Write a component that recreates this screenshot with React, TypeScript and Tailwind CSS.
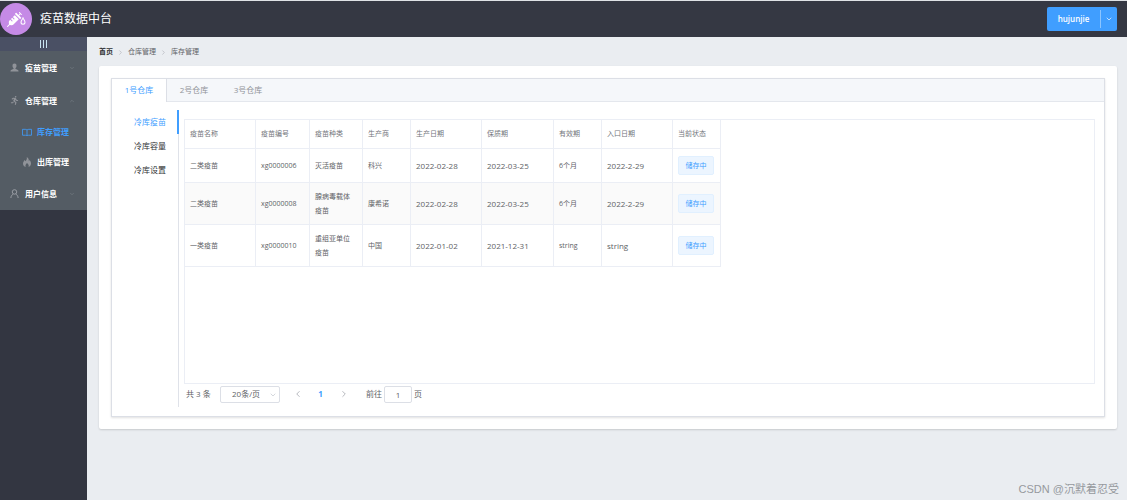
import { useState } from 'react'
import { ChevronDown, ChevronLeft, ChevronRight, ChevronUp } from 'lucide-react'
import { FaRunning, FaSyringe } from 'react-icons/fa'

const columns = [
  { label: '疫苗名称', width: 'w-[71px]' },
  { label: '疫苗编号', width: 'w-[54px]' },
  { label: '疫苗种类', width: 'w-[53px]' },
  { label: '生产商', width: 'w-[48px]' },
  { label: '生产日期', width: 'w-[71px]' },
  { label: '保质期', width: 'w-[72px]' },
  { label: '有效期', width: 'w-[48px]' },
  { label: '入口日期', width: 'w-[71px]' },
  { label: '当前状态', width: 'w-[48px]' },
]

const rows = [
  { name: '二类疫苗', code: 'xg0000006', kind: '灭活疫苗', maker: '科兴', made: '2022-02-28', best: '2022-03-25', valid: '6个月', entry: '2022-2-29' },
  { name: '二类疫苗', code: 'xg0000008', kind: '腺病毒载体疫苗', maker: '康希诺', made: '2022-02-28', best: '2022-03-25', valid: '6个月', entry: '2022-2-29' },
  { name: '一类疫苗', code: 'xg0000010', kind: '重组亚单位疫苗', maker: '中国', made: '2022-01-02', best: '2021-12-31', valid: 'string', entry: 'string' },
]

const warehouses = ['1号仓库', '2号仓库', '3号仓库']
const sections = ['冷库疫苗', '冷库容量', '冷库设置']

function Logo() {
  return (
    <div className="flex size-8 items-center justify-center rounded-full bg-[#c58ae6] text-white">
      <FaSyringe size={15} className="shrink-0" />
      <svg viewBox="0 0 10 14" className="-ml-[2px] mt-1 h-[8px] w-[6px] shrink-0">
        <path d="M5 1.5C4 4 1.5 6.5 1.5 9a3.5 3.5 0 0 0 7 0C8.5 6.5 6 4 5 1.5Z" fill="none" stroke="white" strokeWidth="1.8" />
      </svg>
    </div>
  )
}

function PersonIcon() {
  return (
    <svg viewBox="0 0 20 20" className="size-[9px] shrink-0" fill="#909399">
      <path d="M10 1a4.5 4.5 0 0 1 4.500 5c0 2.500-1 4.500-2.500 5.500v1.500l5.500 2.500c1 .5 1.500 1.500 1.500 3.500H1c0-2 .5-3 1.500-3.500L8 13v-1.500C6.500 10.500 5.500 8.500 5.500 6A4.500 4.500 0 0 1 10 1Z" />
    </svg>
  )
}

function UserIcon() {
  return (
    <svg viewBox="0 0 20 20" className="size-[9px] shrink-0" fill="none" stroke="#a0a4aa" strokeWidth="2">
      <circle cx="10" cy="6.5" r="5" />
      <path d="M2 20c0-4 2-7 5-8.5M18 20c0-4-2-7-5-8.5" />
    </svg>
  )
}

function BookIcon() {
  return (
    <svg viewBox="0 0 22 18" className="h-[9px] w-[10px] shrink-0" fill="none" stroke="currentColor" strokeWidth="1.8">
      <path d="M11 3.5C10 2.3 8.5 2 7 2H1v13h6.5c1.500 0 2.500.4 3.500 1.500 1-1.100 2-1.500 3.500-1.500H21V2h-6c-1.500 0-3 .3-4 1.500ZM11 3.500v13" />
    </svg>
  )
}

function FlameIcon() {
  return (
    <svg viewBox="0 0 20 20" className="size-[10px] shrink-0" fill="#909399">
      <path d="M9.5 0c4 2.500 4.500 5.500 4 8.500.8-.5 1.300-1.300 1.500-2.500 2 2 3.200 4.500 3 7.500-.2 3-2 5.300-5 6.500 1.200-3 .3-5.500-3-8-2.800 2.500-3.800 5-2.500 8-3.500-1-5.500-3.500-5.500-6.500C2 10 4 8.500 5 6c.8.8 1.200 1.500 1.400 2.500C9 6.500 10.500 3.500 9.500 0Z" />
    </svg>
  )
}

function Header() {
  return (
    <header className="flex h-[37px] items-center justify-between border-t border-[#dfe2e6] bg-[#353843] pr-[10px]">
      <div className="flex items-center gap-2">
        <Logo />
        <h1 className="text-[12px] text-white">疫苗数据中台</h1>
      </div>
      <div className="flex h-6 rounded-xs bg-[#409eff] text-white">
        <button className="w-[53px] text-[8px] font-semibold">hujunjie</button>
        <button aria-label="更多" className="my-[3px] flex w-[17px] items-center justify-center border-l border-[#8cc5ff]">
          <ChevronDown size={8} />
        </button>
      </div>
    </header>
  )
}

function Sidebar() {
  const group = 'flex h-[33px] w-full items-center gap-[6px] pl-[10px] pr-3'
  const child = 'flex h-[30px] items-center gap-[5px] pl-[22px]'
  return (
    <aside className="w-[87px] shrink-0 bg-[#333641] text-[8px] font-semibold text-white">
      <button aria-label="折叠菜单" className="flex h-[14px] w-full items-center justify-center gap-[2px] bg-[#4a5064]">
        <i className="h-[8px] w-px bg-[#c8e4f0]" />
        <i className="h-[8px] w-px bg-[#c8e4f0]" />
        <i className="h-[8px] w-px bg-[#c8e4f0]" />
      </button>
      <nav className="bg-[#545c64]">
        <button className={group}>
          <PersonIcon />
          疫苗管理
          <ChevronDown size={6} className="ml-auto text-[#7f868d]" />
        </button>
        <button className={group}>
          <FaRunning size={9} className="text-[#909399]" />
          仓库管理
          <ChevronUp size={6} className="ml-auto text-[#7f868d]" />
        </button>
        <a href="#stock" className={`${child} text-[#409eff]`}>
          <BookIcon />
          库存管理
        </a>
        <a href="#outbound" className={child}>
          <FlameIcon />
          出库管理
        </a>
        <button className={group}>
          <UserIcon />
          用户信息
          <ChevronDown size={6} className="ml-auto text-[#7f868d]" />
        </button>
      </nav>
    </aside>
  )
}

function Breadcrumb() {
  return (
    <nav className="flex h-[29px] items-center gap-1 pt-[2px] text-[7px] text-[#606266]">
      <a href="#home" className="font-bold text-[#303133]">首页</a>
      <ChevronRight size={7} className="text-[#a8abb2]" />
      <span>仓库管理</span>
      <ChevronRight size={7} className="text-[#a8abb2]" />
      <span>库存管理</span>
    </nav>
  )
}

function StockTable() {
  const cell = 'border-r border-b border-[#ebeef5] pl-[5px] pr-[6px] py-[6px]'
  return (
    <table className="w-[536px] table-fixed border-separate border-spacing-0 text-left text-[7px] leading-[14px] text-[#606266]">
      <thead>
        <tr className="h-[29px]">
          {columns.map((c) => (
            <th key={c.label} className={`${cell} ${c.width} font-normal whitespace-nowrap text-[#73767c]`}>{c.label}</th>
          ))}
        </tr>
      </thead>
      <tbody>
        {rows.map((r, i) => (
          <tr key={r.code} className={i === 0 ? 'h-[34px]' : i === 1 ? 'h-[42px] bg-[#fafafa]' : 'h-[42px]'}>
            <td className={cell}>{r.name}</td>
            <td className={cell}>{r.code}</td>
            <td className={cell}>{r.kind}</td>
            <td className={cell}>{r.maker}</td>
            <td className={`${cell} text-[8px]`}>{r.made}</td>
            <td className={`${cell} text-[8px]`}>{r.best}</td>
            <td className={cell}>{r.valid}</td>
            <td className={`${cell} text-[8px]`}>{r.entry}</td>
            <td className={cell}>
              <span className="flex h-[19px] items-center justify-center rounded-xs border border-[#e1f0ff] bg-[#ecf5ff] text-[#409eff]">
                储存中
              </span>
            </td>
          </tr>
        ))}
      </tbody>
    </table>
  )
}

function Pagination() {
  const [page, setPage] = useState('1')
  return (
    <div className="flex h-5 items-center pl-[2px] text-[8px] text-[#606266]">
      <span className="w-[34px]">共 3 条</span>
      <div className="relative">
        <select aria-label="每页条数" className="block h-[17px] w-[60px] appearance-none rounded-xs border border-[#dcdfe6] bg-white pl-[11px]">
          <option>20条/页</option>
          <option>50条/页</option>
        </select>
        <ChevronDown size={8} className="pointer-events-none absolute top-[5px] right-[3px] text-[#c0c4cc]" />
      </div>
      <div className="ml-[6px] flex">
        <button aria-label="上一页" className="flex w-[23px] items-center justify-center text-[#a8abb2]">
          <ChevronLeft size={10} />
        </button>
        <button className="w-[23px] font-bold text-[#409eff]">1</button>
        <button aria-label="下一页" className="flex w-[23px] items-center justify-center text-[#a8abb2]">
          <ChevronRight size={10} />
        </button>
      </div>
      <label className="ml-[11px] flex items-center gap-[2px]">
        前往
        <input
          value={page}
          onChange={(e) => setPage(e.target.value)}
          className="h-[17px] w-[28px] rounded-xs border border-[#dcdfe6] text-center"
        />
        页
      </label>
    </div>
  )
}

export default function App() {
  const [warehouse, setWarehouse] = useState(0)
  const [section, setSection] = useState(0)

  return (
    <div className="relative flex min-h-screen flex-col bg-[#eaedf1] font-['Open_Sans','Noto_Sans_CJK_SC',sans-serif]">
      <Header />
      <div className="flex flex-1">
        <Sidebar />
        <main className="min-w-0 flex-1 pr-[10px] pl-3">
          <Breadcrumb />
          <div className="rounded-xs bg-white p-3 shadow-[0_1px_2px_rgba(0,0,0,0.15)]">
            <div className="border border-[#dcdfe6] shadow-[0_1px_2px_rgba(0,0,0,0.12)]">

              {/* Warehouse tabs */}
              <div role="tablist" className="flex h-[23px] border-b border-[#e4e7ed] bg-[#f5f7fa]">
                {warehouses.map((w, i) => (
                  <button
                    key={w}
                    role="tab"
                    aria-selected={i === warehouse}
                    onClick={() => setWarehouse(i)}
                    className={
                      i === warehouse
                        ? '-mb-px w-[55px] border-r border-[#dcdfe6] bg-white pb-px text-[8px] text-[#409eff]'
                        : 'w-[54px] text-[8px] text-[#909399]'
                    }
                  >
                    {w}
                  </button>
                ))}
              </div>

              <div className="flex p-[9px] pt-2">
                {/* Section tabs */}
                <div role="tablist" className="flex w-[58px] shrink-0 flex-col border-r border-[#dfe2e9]">
                  {sections.map((s, i) => (
                    <button
                      key={s}
                      role="tab"
                      aria-selected={i === section}
                      onClick={() => setSection(i)}
                      className={
                        i === section
                          ? '-mr-px h-6 border-r-2 border-[#409eff] pr-[11px] text-right text-[8px] text-[#409eff]'
                          : 'h-6 pr-3 text-right text-[8px] text-[#303133]'
                      }
                    >
                      {s}
                    </button>
                  ))}
                </div>

                <div className="min-w-0 flex-1 pt-[9px] pb-[3px] pl-[5px]">
                  <div className="min-h-[265px] border border-[#ebeef5]">
                    <StockTable />
                  </div>
                  <Pagination />
                </div>
              </div>

            </div>
          </div>
        </main>
      </div>
      <p className="absolute right-2 bottom-[3px] font-['Liberation_Sans','Noto_Sans_CJK_SC',sans-serif] text-[11px] text-[#96999e]">
        CSDN @沉默着忍受
      </p>
    </div>
  )
}
